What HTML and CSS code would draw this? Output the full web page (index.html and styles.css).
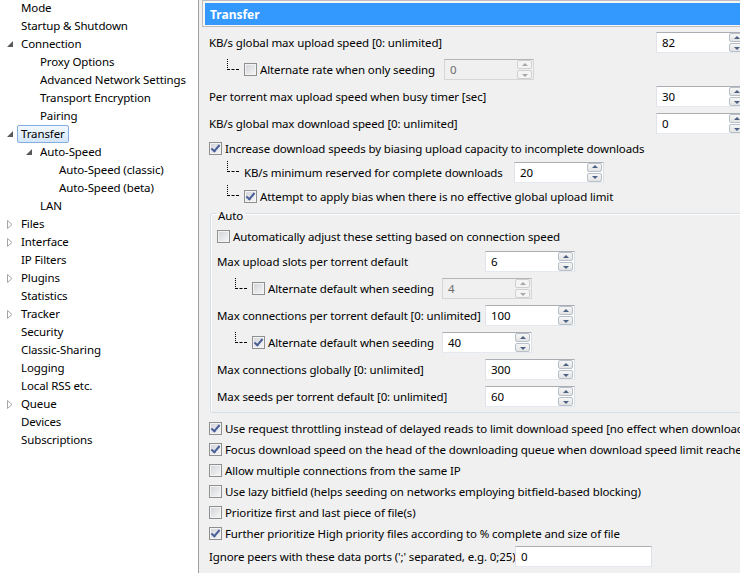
FILE: index.html
```html
<!DOCTYPE html>
<html>
<head>
<meta charset="utf-8">
<link rel="stylesheet" href="styles.css">
</head>
<body>
<div class="app">
  <div class="tree">
    <div class="node l0"><span class="exp"></span><span class="lbl">Mode</span></div>
    <div class="node l0"><span class="exp"></span><span class="lbl">Startup &amp; Shutdown</span></div>
    <div class="node l0"><span class="exp"><svg width="6" height="6" viewBox="0 0 6 6"><polygon points="6,0 6,6 0,6" fill="#595959"/></svg></span><span class="lbl">Connection</span></div>
    <div class="node l1"><span class="exp"></span><span class="lbl">Proxy Options</span></div>
    <div class="node l1"><span class="exp"></span><span class="lbl">Advanced Network Settings</span></div>
    <div class="node l1"><span class="exp"></span><span class="lbl">Transport Encryption</span></div>
    <div class="node l1"><span class="exp"></span><span class="lbl">Pairing</span></div>
    <div class="node l0"><span class="exp"><svg width="6" height="6" viewBox="0 0 6 6"><polygon points="6,0 6,6 0,6" fill="#595959"/></svg></span><span class="lbl sel">Transfer</span></div>
    <div class="node l1"><span class="exp"><svg width="6" height="6" viewBox="0 0 6 6"><polygon points="6,0 6,6 0,6" fill="#595959"/></svg></span><span class="lbl">Auto-Speed</span></div>
    <div class="node l2"><span class="exp"></span><span class="lbl">Auto-Speed (classic)</span></div>
    <div class="node l2"><span class="exp"></span><span class="lbl">Auto-Speed (beta)</span></div>
    <div class="node l1"><span class="exp"></span><span class="lbl">LAN</span></div>
    <div class="node l0"><span class="exp"><svg width="6" height="9" viewBox="0 0 6 9"><polygon points="0.5,0.5 5,4.5 0.5,8.5" fill="none" stroke="#a6a6a6"/></svg></span><span class="lbl">Files</span></div>
    <div class="node l0"><span class="exp"><svg width="6" height="9" viewBox="0 0 6 9"><polygon points="0.5,0.5 5,4.5 0.5,8.5" fill="none" stroke="#a6a6a6"/></svg></span><span class="lbl">Interface</span></div>
    <div class="node l0"><span class="exp"></span><span class="lbl">IP Filters</span></div>
    <div class="node l0"><span class="exp"><svg width="6" height="9" viewBox="0 0 6 9"><polygon points="0.5,0.5 5,4.5 0.5,8.5" fill="none" stroke="#a6a6a6"/></svg></span><span class="lbl">Plugins</span></div>
    <div class="node l0"><span class="exp"></span><span class="lbl">Statistics</span></div>
    <div class="node l0"><span class="exp"><svg width="6" height="9" viewBox="0 0 6 9"><polygon points="0.5,0.5 5,4.5 0.5,8.5" fill="none" stroke="#a6a6a6"/></svg></span><span class="lbl">Tracker</span></div>
    <div class="node l0"><span class="exp"></span><span class="lbl">Security</span></div>
    <div class="node l0"><span class="exp"></span><span class="lbl">Classic-Sharing</span></div>
    <div class="node l0"><span class="exp"></span><span class="lbl">Logging</span></div>
    <div class="node l0"><span class="exp"></span><span class="lbl">Local RSS etc.</span></div>
    <div class="node l0"><span class="exp"><svg width="6" height="9" viewBox="0 0 6 9"><polygon points="0.5,0.5 5,4.5 0.5,8.5" fill="none" stroke="#a6a6a6"/></svg></span><span class="lbl">Queue</span></div>
    <div class="node l0"><span class="exp"></span><span class="lbl">Devices</span></div>
    <div class="node l0"><span class="exp"></span><span class="lbl">Subscriptions</span></div>
  </div>

  <div class="pane">
    <div class="header"><div class="header-in">Transfer</div></div>

    <div class="row r27">
      <span class="cell top-l">KB/s global max upload speed [0: unlimited]</span>
      <div class="spin"><span class="val">82</span><span class="btns"><span class="b up"></span><span class="b dn"></span></span></div>
    </div>
    <div class="row r27">
      <span class="conn"></span>
      <span class="cb"></span><span class="cell w-alt1">Alternate rate when only seeding</span>
      <div class="spin dis"><span class="val">0</span><span class="btns"><span class="b up"></span><span class="b dn"></span></span></div>
    </div>
    <div class="row r27">
      <span class="cell top-l">Per torrent max upload speed when busy timer [sec]</span>
      <div class="spin"><span class="val">30</span><span class="btns"><span class="b up"></span><span class="b dn"></span></span></div>
    </div>
    <div class="row r27">
      <span class="cell top-l">KB/s global max download speed [0: unlimited]</span>
      <div class="spin"><span class="val">0</span><span class="btns"><span class="b up"></span><span class="b dn"></span></span></div>
    </div>
    <div class="row r23">
      <span class="cb on"></span><span class="txt">Increase download speeds by biasing upload capacity to incomplete downloads</span>
    </div>
    <div class="row r24">
      <span class="conn"></span>
      <span class="cell w-min">KB/s minimum reserved for complete downloads</span>
      <div class="spin"><span class="val">20</span><span class="btns"><span class="b up"></span><span class="b dn"></span></span></div>
    </div>
    <div class="row r24">
      <span class="conn"></span>
      <span class="cb on"></span><span class="txt">Attempt to apply bias when there is no effective global upload limit</span>
    </div>

    <fieldset class="group">
      <legend>Auto</legend>
      <div class="row r24">
        <span class="cb"></span><span class="txt">Automatically adjust these setting based on connection speed</span>
      </div>
      <div class="row r27">
        <span class="cell grp-l">Max upload slots per torrent default</span>
        <div class="spin"><span class="val">6</span><span class="btns"><span class="b up"></span><span class="b dn"></span></span></div>
      </div>
      <div class="row r27">
        <span class="conn"></span>
        <span class="cb"></span><span class="cell w-alt2">Alternate default when seeding</span>
        <div class="spin dis"><span class="val">4</span><span class="btns"><span class="b up"></span><span class="b dn"></span></span></div>
      </div>
      <div class="row r27">
        <span class="cell grp-l">Max connections per torrent default [0: unlimited]</span>
        <div class="spin"><span class="val">100</span><span class="btns"><span class="b up"></span><span class="b dn"></span></span></div>
      </div>
      <div class="row r27">
        <span class="conn"></span>
        <span class="cb on"></span><span class="cell w-alt2">Alternate default when seeding</span>
        <div class="spin"><span class="val">40</span><span class="btns"><span class="b up"></span><span class="b dn"></span></span></div>
      </div>
      <div class="row r27">
        <span class="cell grp-l">Max connections globally [0: unlimited]</span>
        <div class="spin"><span class="val">300</span><span class="btns"><span class="b up"></span><span class="b dn"></span></span></div>
      </div>
      <div class="row r27">
        <span class="cell grp-l">Max seeds per torrent default [0: unlimited]</span>
        <div class="spin"><span class="val">60</span><span class="btns"><span class="b up"></span><span class="b dn"></span></span></div>
      </div>
    </fieldset>

    <div class="checks">
      <div class="row r21"><span class="cb on"></span><span class="txt">Use request throttling instead of delayed reads to limit download speed [no effect when download speed is unlimited]</span></div>
      <div class="row r21"><span class="cb on"></span><span class="txt">Focus download speed on the head of the downloading queue when download speed limit reached</span></div>
      <div class="row r21"><span class="cb"></span><span class="txt">Allow multiple connections from the same IP</span></div>
      <div class="row r21"><span class="cb"></span><span class="txt">Use lazy bitfield (helps seeding on networks employing bitfield-based blocking)</span></div>
      <div class="row r21"><span class="cb"></span><span class="txt">Prioritize first and last piece of file(s)</span></div>
      <div class="row r21"><span class="cb on"></span><span class="txt">Further prioritize High priority files according to % complete and size of file</span></div>
      <div class="row r24">
        <span class="cell w-ports">Ignore peers with these data ports (';' separated, e.g. 0;25)</span>
        <div class="edit"><span class="val">0</span></div>
      </div>
    </div>
  </div>
</div>
</body>
</html>
```

FILE: styles.css
```css
html, body {
  margin: 0;
  padding: 0;
  width: 740px;
  height: 573px;
  overflow: hidden;
  background: #f0f0f0;
}
body {
  font-family: "Noto Sans", "Open Sans", sans-serif;
  font-size: 11.5px;
  letter-spacing: -0.12px;
  color: #000;
}
.app {
  display: flex;
  width: 740px;
  height: 573px;
}

/* ---------- tree ---------- */
.tree {
  width: 198px;
  flex: none;
  background: #fff;
  border-right: 1px solid #a0a0a0;
  margin-top: -1px;
  height: 575px;
}
.node {
  height: 18px;
  display: flex;
  align-items: center;
  white-space: nowrap;
}
.node.l0 { padding-left: 5px; }
.node.l1 { padding-left: 24px; }
.node.l2 { padding-left: 43px; }
.exp {
  width: 16px;
  flex: none;
  display: flex;
  align-items: center;
  padding-left: 2px;
  box-sizing: border-box;
  height: 18px;
}
.exp svg { display: block; }
.lbl { line-height: 16px; }
.sel {
  margin-left: -4px;
  padding: 0 3px;
  border: 1px solid #84acdd;
  border-radius: 2px;
  background: linear-gradient(#f2f8fe, #d4e6fb);
}

/* ---------- right pane ---------- */
.pane {
  flex: 1;
  min-width: 0;
  overflow: hidden;
  padding-left: 3px;
}
.header {
  height: 27px;
  box-sizing: border-box;
  border: 1px solid #bdbdbd;
  border-right: none;
  padding: 2px 0 1px 2px;
  margin-bottom: 2px;
  background: #f7f7f7;
}
.header-in {
  height: 22px;
  background: #3399ff;
  color: #fff;
  font-weight: bold;
  font-size: 12px;
  letter-spacing: 0;
  line-height: 23px;
  padding-left: 5px;
}
.row {
  display: flex;
  align-items: center;
  white-space: nowrap;
  padding-left: 7px;
}
.r27 { height: 27px; }
.r24 { height: 24px; }
.r23 { height: 23px; }
.r21 { height: 21px; }

.cell { flex: none; }
.top-l { width: 447px; }
.w-alt1 { width: 184px; }
.w-min { width: 270px; }
.grp-l { width: 268px; }
.w-alt2 { width: 174px; }
.w-ports { width: 306px; }
.txt { flex: none; }

/* tree connector */
.conn {
  flex: none;
  width: 12px;
  height: 11px;
  margin: -11px 5px 0 18px;
  border-left: 1px dotted #000;
  border-bottom: 1px dashed #000;
  box-sizing: border-box;
}

/* checkbox */
.cb {
  flex: none;
  width: 13px;
  height: 13px;
  box-sizing: border-box;
  border: 1px solid #8e8f8f;
  background: linear-gradient(135deg, #d0d3d8, #f7f7f7);
  box-shadow: inset 0 0 0 1px #f4f4f4;
  margin-right: 3px;
  position: relative;
}
.cb.on::after {
  content: "";
  position: absolute;
  left: 3px;
  top: 0px;
  width: 3px;
  height: 7px;
  border: solid #4a5f97;
  border-width: 0 2px 2px 0;
  transform: rotate(40deg);
}

/* spinner */
.spin {
  flex: none;
  width: 90px;
  height: 21px;
  box-sizing: border-box;
  border: 1px solid;
  border-color: #abadb3 #dbdfe6 #e3e9ef #e2e3ea;
  background: #fff;
  display: flex;
  align-items: center;
}
.val {
  flex: 1;
  padding-left: 5px;
  line-height: 19px;
}
.btns {
  flex: none;
  width: 15px;
  height: 19px;
  display: flex;
  flex-direction: column;
  gap: 1px;
  margin-right: 1px;
}
.b {
  flex: 1;
  border: 1px solid #b7bfc9;
  border-radius: 2px;
  background: linear-gradient(#f6f6f6, #e3e3e3);
  position: relative;
}
.b::after {
  content: "";
  position: absolute;
  left: 50%;
  top: 50%;
  margin-left: -3px;
  border-left: 3px solid transparent;
  border-right: 3px solid transparent;
}
.b.up::after { border-bottom: 3px solid #4d6185; margin-top: -2px; }
.b.dn::after { border-top: 3px solid #4d6185; margin-top: -1px; }
.spin.dis {
  background: #f0f0f0;
  border-color: #b5b5b5 #d6d6d6 #d6d6d6 #d6d6d6;
  color: #6d6d6d;
}
.spin.dis .b { border-color: #d0d0d0; background: #f4f4f4; }
.spin.dis .b.up::after { border-bottom-color: #a8a8a8; }
.spin.dis .b.dn::after { border-top-color: #a8a8a8; }

.edit {
  flex: none;
  width: 137px;
  height: 21px;
  box-sizing: border-box;
  border: 1px solid;
  border-color: #abadb3 #dbdfe6 #e3e9ef #e2e3ea;
  background: #fff;
  display: flex;
  align-items: center;
}

/* group */
.group {
  margin: -6px -60px 0 8px;
  padding: 0 0 2px 0;
  border: 1px solid #d5dfe5;
  border-radius: 3px;
  box-shadow: inset 1px 1px 0 #fff;
}
.group legend {
  padding: 6px 2px 0 2px;
  margin-left: 5px;
  line-height: 16px;
}
.group .row { padding-left: 6px; }
.group .conn { margin-left: 18px; }

.checks { padding-top: 5px; }
```
